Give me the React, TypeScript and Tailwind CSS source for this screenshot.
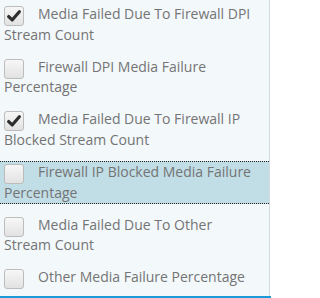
const items = [
  { label: "Media Failed Due To Firewall DPI Stream Count", checked: true },
  { label: "Firewall DPI Media Failure Percentage", checked: false },
  { label: "Media Failed Due To Firewall IP Blocked Stream Count", checked: true },
  { label: "Firewall IP Blocked Media Failure Percentage", checked: false, active: true },
  { label: "Media Failed Due To Other Stream Count", checked: false },
  { label: "Other Media Failure Percentage", checked: false },
];

function Box({ checked }: { checked: boolean }) {
  return (
    <span className="relative top-[2px] mr-[14px] inline-flex h-[20px] w-[20px] items-center justify-center rounded-[3px] border border-[#bcbcbc] bg-gradient-to-b from-[#f7f7f7] to-[#e2e2e2] align-top">
      {checked && (
        <svg width="16" height="16" viewBox="0 0 15 15">
          <path
            d="M2.5 8 L5.8 11.2 L12.5 3.5"
            fill="none"
            stroke="#2e2e2e"
            strokeWidth="3"
            strokeLinecap="round"
            strokeLinejoin="round"
          />
        </svg>
      )}
    </span>
  );
}

export default function App() {
  return (
    <div className="h-[298px] w-[271px] overflow-hidden bg-white font-['Open_Sans',sans-serif]">
      <div className="flex h-[296px] w-[270px] flex-col border-r border-[#d3dbe0] bg-[#f3f8fb] pt-[3px]">
        {items.map((item) => (
          <div
            key={item.label}
            className={
              item.active
                ? "mb-[9.33px] border-y border-dotted border-[#222] bg-[#c1dde6] pl-[4px] pr-2 text-[14px] leading-[20.67px] text-[#747474]"
                : "mb-[9.33px] border-y border-transparent pl-[4px] pr-2 text-[14px] leading-[20.67px] text-[#747474]"
            }
          >
            <Box checked={item.checked} />
            {item.label}
          </div>
        ))}
      </div>
      <div className="h-[2px] w-full bg-[#1a9bd8]" />
    </div>
  );
}
